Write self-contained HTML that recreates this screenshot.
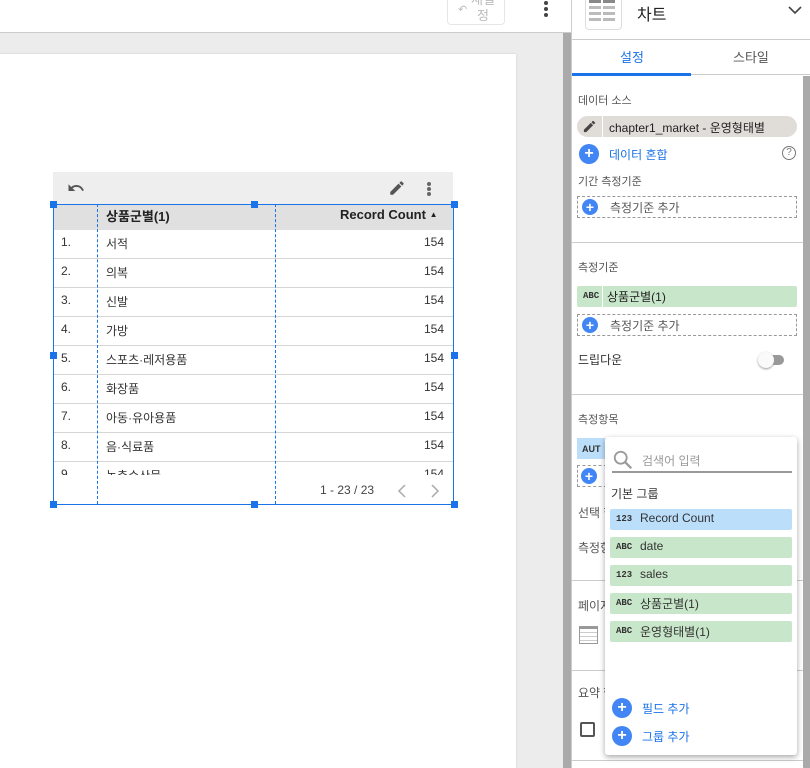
<!DOCTYPE html>
<html><head><meta charset="utf-8"><style>
*{box-sizing:border-box;margin:0;padding:0}
body{width:810px;height:768px;overflow:hidden;position:relative;background:#fff;font-family:"Liberation Sans","Noto Sans CJK KR",sans-serif;color:#333}
.a{position:absolute}
.t{font-size:12px;color:#555}
.row{position:absolute;left:53px;width:400px;height:29px;border-bottom:1px solid #d6d6d6;font-size:12px;color:#333}
.row span{position:absolute;top:5px}
.plus{position:absolute;width:18px;height:18px;border-radius:50%;background:#4285f4;color:#fff;font-size:16px;line-height:18px;text-align:center;font-weight:bold}
.dash{position:absolute;border:1px dashed #999;height:22px;left:577px;width:220px;font-size:12px;color:#555}
.item{position:absolute;left:610px;width:182px;height:21px;font-size:12px;color:#333;background:#c8e6c9;border-radius:2px}
.item b{position:absolute;left:6px;top:5px;font-size:9px;color:#333;font-family:"Liberation Mono",monospace}
.item span{position:absolute;left:30px;top:2px}
.h{position:absolute;width:7px;height:7px;background:#1a73e8}
</style></head><body>
<div class="a" style="left:0;top:0;width:571px;height:33px;border-bottom:1px solid #ccc;background:#fff"></div>
<div class="a" style="left:447px;top:0;width:58px;height:25px;border:1px solid #e6e6e6;border-top:none;border-radius:0 0 4px 4px;font-size:13px;color:#bbb;text-align:center;line-height:16px;padding-left:14px;overflow:hidden"><div style="margin-top:-8px">재설<br>정</div></div>
<div class="a" style="left:458px;top:3px;font-size:11px;color:#bbb">↶</div>
<div class="a" style="left:544px;top:1px;width:4px;height:4px;border-radius:2px;background:#444;box-shadow:0 6px 0 #444,0 12px 0 #444"></div>
<div class="a" style="left:0;top:33px;width:563px;height:735px;background:#ececec"></div>
<div class="a" style="left:563px;top:33px;width:8px;height:735px;background:#aaa"></div>
<div class="a" style="left:0;top:54px;width:516px;height:714px;background:#fff;box-shadow:0 0 2px #ccc"></div>
<div class="a" style="left:53px;top:172px;width:400px;height:32px;background:#eee"></div>
<svg class="a" style="left:66px;top:179px" width="20" height="18" viewBox="0 0 24 24"><path fill="#555" d="M12.5 8c-2.65 0-5.05 1-6.9 2.6L2 7v9h9l-3.62-3.62c1.39-1.16 3.16-1.88 5.12-1.88 3.54 0 6.55 2.31 7.6 5.5l2.37-.78C21.08 11.03 17.15 8 12.5 8z"/></svg>
<svg class="a" style="left:388px;top:179px" width="18" height="18" viewBox="0 0 24 24"><path fill="#555" d="M3 17.25V21h3.75L17.81 9.94l-3.75-3.75L3 17.25zM20.71 7.04a1 1 0 000-1.41l-2.34-2.34a1 1 0 00-1.41 0l-1.83 1.83 3.75 3.75 1.83-1.83z"/></svg>
<div class="a" style="left:427px;top:182px;width:4px;height:4px;border-radius:2px;background:#666;box-shadow:0 5px 0 #666,0 10px 0 #666"></div>
<div class="a" style="left:53px;top:204px;width:400px;height:26px;background:#e0e0e0"></div>
<div class="a" style="left:106px;top:206px;font-size:13px;color:#222;font-weight:bold">상품군별(1)</div>
<div class="a" style="left:340px;top:207px;font-size:13px;color:#222;font-weight:bold">Record Count <span style="font-size:8px;position:relative;top:-2px">▲</span></div>
<div class="row" style="top:230px"><span style="left:8px">1.</span><span style="left:53px">서적</span><span style="right:9px">154</span></div>
<div class="row" style="top:259px"><span style="left:8px">2.</span><span style="left:53px">의복</span><span style="right:9px">154</span></div>
<div class="row" style="top:288px"><span style="left:8px">3.</span><span style="left:53px">신발</span><span style="right:9px">154</span></div>
<div class="row" style="top:317px"><span style="left:8px">4.</span><span style="left:53px">가방</span><span style="right:9px">154</span></div>
<div class="row" style="top:346px"><span style="left:8px">5.</span><span style="left:53px">스포츠·레저용품</span><span style="right:9px">154</span></div>
<div class="row" style="top:375px"><span style="left:8px">6.</span><span style="left:53px">화장품</span><span style="right:9px">154</span></div>
<div class="row" style="top:404px"><span style="left:8px">7.</span><span style="left:53px">아동·유아용품</span><span style="right:9px">154</span></div>
<div class="row" style="top:433px"><span style="left:8px">8.</span><span style="left:53px">음·식료품</span><span style="right:9px">154</span></div>
<div class="a" style="left:53px;top:462px;width:400px;height:13px;overflow:hidden;font-size:12px"><span class="a" style="left:8px;top:5px">9.</span><span class="a" style="left:53px;top:5px">농축수산물</span><span class="a" style="right:9px;top:5px">154</span></div>
<div class="a" style="left:320px;top:483px;font-size:12px;color:#444">1 - 23 / 23</div>
<svg class="a" style="left:396px;top:483px" width="12" height="16" viewBox="0 0 12 16"><path d="M9 2L3 8l6 6" fill="none" stroke="#aaa" stroke-width="1.5"/></svg>
<svg class="a" style="left:429px;top:483px" width="12" height="16" viewBox="0 0 12 16"><path d="M3 2l6 6-6 6" fill="none" stroke="#aaa" stroke-width="1.5"/></svg>
<div class="a" style="left:53px;top:204px;width:401px;height:301px;border:1px solid #1a73e8"></div>
<div class="a" style="left:97px;top:204px;height:300px;border-left:1px dashed #1a73e8"></div>
<div class="a" style="left:275px;top:204px;height:300px;border-left:1px dashed #1a73e8"></div>
<div class="h" style="left:50px;top:201px"></div><div class="h" style="left:251px;top:201px"></div><div class="h" style="left:451px;top:201px"></div>
<div class="h" style="left:50px;top:352px"></div><div class="h" style="left:451px;top:352px"></div>
<div class="h" style="left:50px;top:501px"></div><div class="h" style="left:251px;top:501px"></div><div class="h" style="left:451px;top:501px"></div>
<div class="a" style="left:571px;top:0;width:239px;height:768px;border-left:1px solid #ccc;background:#fff"></div>
<div class="a" style="left:585px;top:0;width:37px;height:30px;border:1px solid #ddd;border-top:none;border-radius:0 0 4px 4px"></div>
<div class="a" style="left:589px;top:0;width:12px;height:3px;background:#888;box-shadow:14px 0 0 #888,0 6px 0 #bbb,14px 6px 0 #bbb,0 12px 0 #bbb,14px 12px 0 #bbb,0 18px 0 #bbb,14px 18px 0 #bbb"></div>
<div class="a" style="left:637px;top:1px;font-size:16px;color:#222">차트</div>
<svg class="a" style="left:788px;top:5px" width="14" height="10" viewBox="0 0 14 10"><path d="M1 2l6 6 6-6" fill="none" stroke="#444" stroke-width="1.6"/></svg>
<div class="a" style="left:572px;top:39px;width:238px;border-top:1px solid #ccc"></div>
<div class="a" style="left:620px;top:47px;font-size:13px;color:#1a73e8">설정</div>
<div class="a" style="left:733px;top:47px;font-size:13px;color:#555">스타일</div>
<div class="a" style="left:572px;top:73px;width:119px;height:3px;background:#1a73e8"></div>
<div class="a" style="left:691px;top:74px;width:119px;border-top:1px solid #ccc"></div>
<div class="a" style="left:803px;top:76px;width:7px;height:692px;background:#aaa"></div>
<div class="a t" style="left:578px;top:92px;font-size:11px">데이터 소스</div>
<div class="a" style="left:577px;top:116px;width:220px;height:21px;border-radius:11px;background:#e0dcd8"></div>
<div class="a" style="left:602px;top:116px;width:1px;height:21px;background:#fff"></div>
<svg class="a" style="left:582px;top:119px" width="15" height="15" viewBox="0 0 24 24"><path fill="#444" d="M3 17.25V21h3.75L17.81 9.94l-3.75-3.75L3 17.25zM20.71 7.04a1 1 0 000-1.41l-2.34-2.34a1 1 0 00-1.41 0l-1.83 1.83 3.75 3.75 1.83-1.83z"/></svg>
<div class="a" style="left:609px;top:119px;font-size:12px;color:#222">chapter1_market - 운영형태별</div>
<div class="plus" style="left:579px;top:144px;width:20px;height:20px;line-height:20px">+</div>
<div class="a" style="left:609px;top:146px;font-size:12px;color:#1a73e8">데이터 혼합</div>
<div class="a" style="left:782px;top:146px;width:14px;height:14px;border:1px solid #777;border-radius:50%;font-size:10px;text-align:center;line-height:12px;color:#777">?</div>
<div class="a t" style="left:578px;top:173px;font-size:11px">기간 측정기준</div>
<div class="dash" style="top:196px"><div class="plus" style="left:4px;top:2px;width:16px;height:16px;line-height:16px;font-size:14px">+</div><span class="a" style="left:32px;top:2px">측정기준 추가</span></div>
<div class="a" style="left:572px;top:242px;width:231px;border-top:1px solid #ccc"></div>
<div class="a t" style="left:578px;top:259px;font-size:11px">측정기준</div>
<div class="item" style="left:577px;top:286px;width:220px"><b>ABC</b><span style="color:#222">상품군별(1)</span></div>
<div class="a" style="left:602px;top:286px;width:1px;height:21px;background:#fff"></div>
<div class="dash" style="top:314px"><div class="plus" style="left:4px;top:2px;width:16px;height:16px;line-height:16px;font-size:14px">+</div><span class="a" style="left:32px;top:2px">측정기준 추가</span></div>
<div class="a" style="left:578px;top:351px;font-size:12px;color:#333">드립다운</div>
<div class="a" style="left:762px;top:355px;width:22px;height:10px;border-radius:5px;background:#999"></div>
<div class="a" style="left:758px;top:352px;width:16px;height:16px;border-radius:50%;background:#fafafa;box-shadow:0 1px 2px #999"></div>
<div class="a" style="left:572px;top:394px;width:231px;border-top:1px solid #ccc"></div>
<div class="a t" style="left:578px;top:411px;font-size:11px">측정항목</div>
<div class="a" style="left:577px;top:438px;width:30px;height:21px;background:#bbdefb;font-size:9px;font-weight:bold;padding:6px 0 0 5px">AUT</div>
<div class="a" style="left:577px;top:465px;width:30px;height:22px;border:1px dashed #999"></div>
<div class="plus" style="left:581px;top:468px;width:16px;height:16px;line-height:16px;font-size:14px">+</div>
<div class="a t" style="left:578px;top:504px">선택 항</div>
<div class="a t" style="left:578px;top:539px">측정항</div>
<div class="a" style="left:572px;top:580px;width:231px;border-top:1px solid #ccc"></div>
<div class="a t" style="left:578px;top:597px">페이지</div>
<div class="a" style="left:579px;top:626px;width:19px;height:18px;border:1px solid #999;background:repeating-linear-gradient(#fff 0,#fff 3px,#ccc 3px,#ccc 4px);border-top:3px solid #999"></div>
<div class="a" style="left:572px;top:670px;width:231px;border-top:1px solid #ccc"></div>
<div class="a t" style="left:578px;top:684px">요약 행</div>
<div class="a" style="left:580px;top:722px;width:15px;height:15px;border:2px solid #555;border-radius:2px"></div>
<div class="a" style="left:572px;top:760px;width:231px;border-top:1px solid #ccc"></div>
<div class="a" style="left:605px;top:437px;width:192px;height:318px;background:#fff;border-radius:3px;box-shadow:0 2px 6px rgba(0,0,0,.35)"></div>
<svg class="a" style="left:612px;top:449px" width="22" height="22" viewBox="0 0 24 24"><circle cx="9.5" cy="9.5" r="6.5" fill="none" stroke="#999" stroke-width="2"/><path d="M14.5 14.5L21 21" stroke="#999" stroke-width="2.5"/></svg>
<div class="a" style="left:642px;top:452px;font-size:12px;color:#999">검색어 입력</div>
<div class="a" style="left:612px;top:471px;width:180px;height:2px;background:#999"></div>
<div class="a" style="left:611px;top:485px;font-size:12px;color:#333">기본 그룹</div>
<div class="item" style="top:509px;background:#bbdefb"><b>123</b><span>Record Count</span></div>
<div class="item" style="top:537px"><b>ABC</b><span>date</span></div>
<div class="item" style="top:565px"><b>123</b><span>sales</span></div>
<div class="item" style="top:593px"><b>ABC</b><span>상품군별(1)</span></div>
<div class="item" style="top:621px"><b>ABC</b><span>운영형태별(1)</span></div>
<div class="plus" style="left:612px;top:698px;width:20px;height:20px;line-height:20px">+</div>
<div class="a" style="left:642px;top:700px;font-size:12px;color:#1a73e8">필드 추가</div>
<div class="plus" style="left:612px;top:726px;width:20px;height:20px;line-height:20px">+</div>
<div class="a" style="left:642px;top:728px;font-size:12px;color:#1a73e8">그룹 추가</div>
</body></html>
